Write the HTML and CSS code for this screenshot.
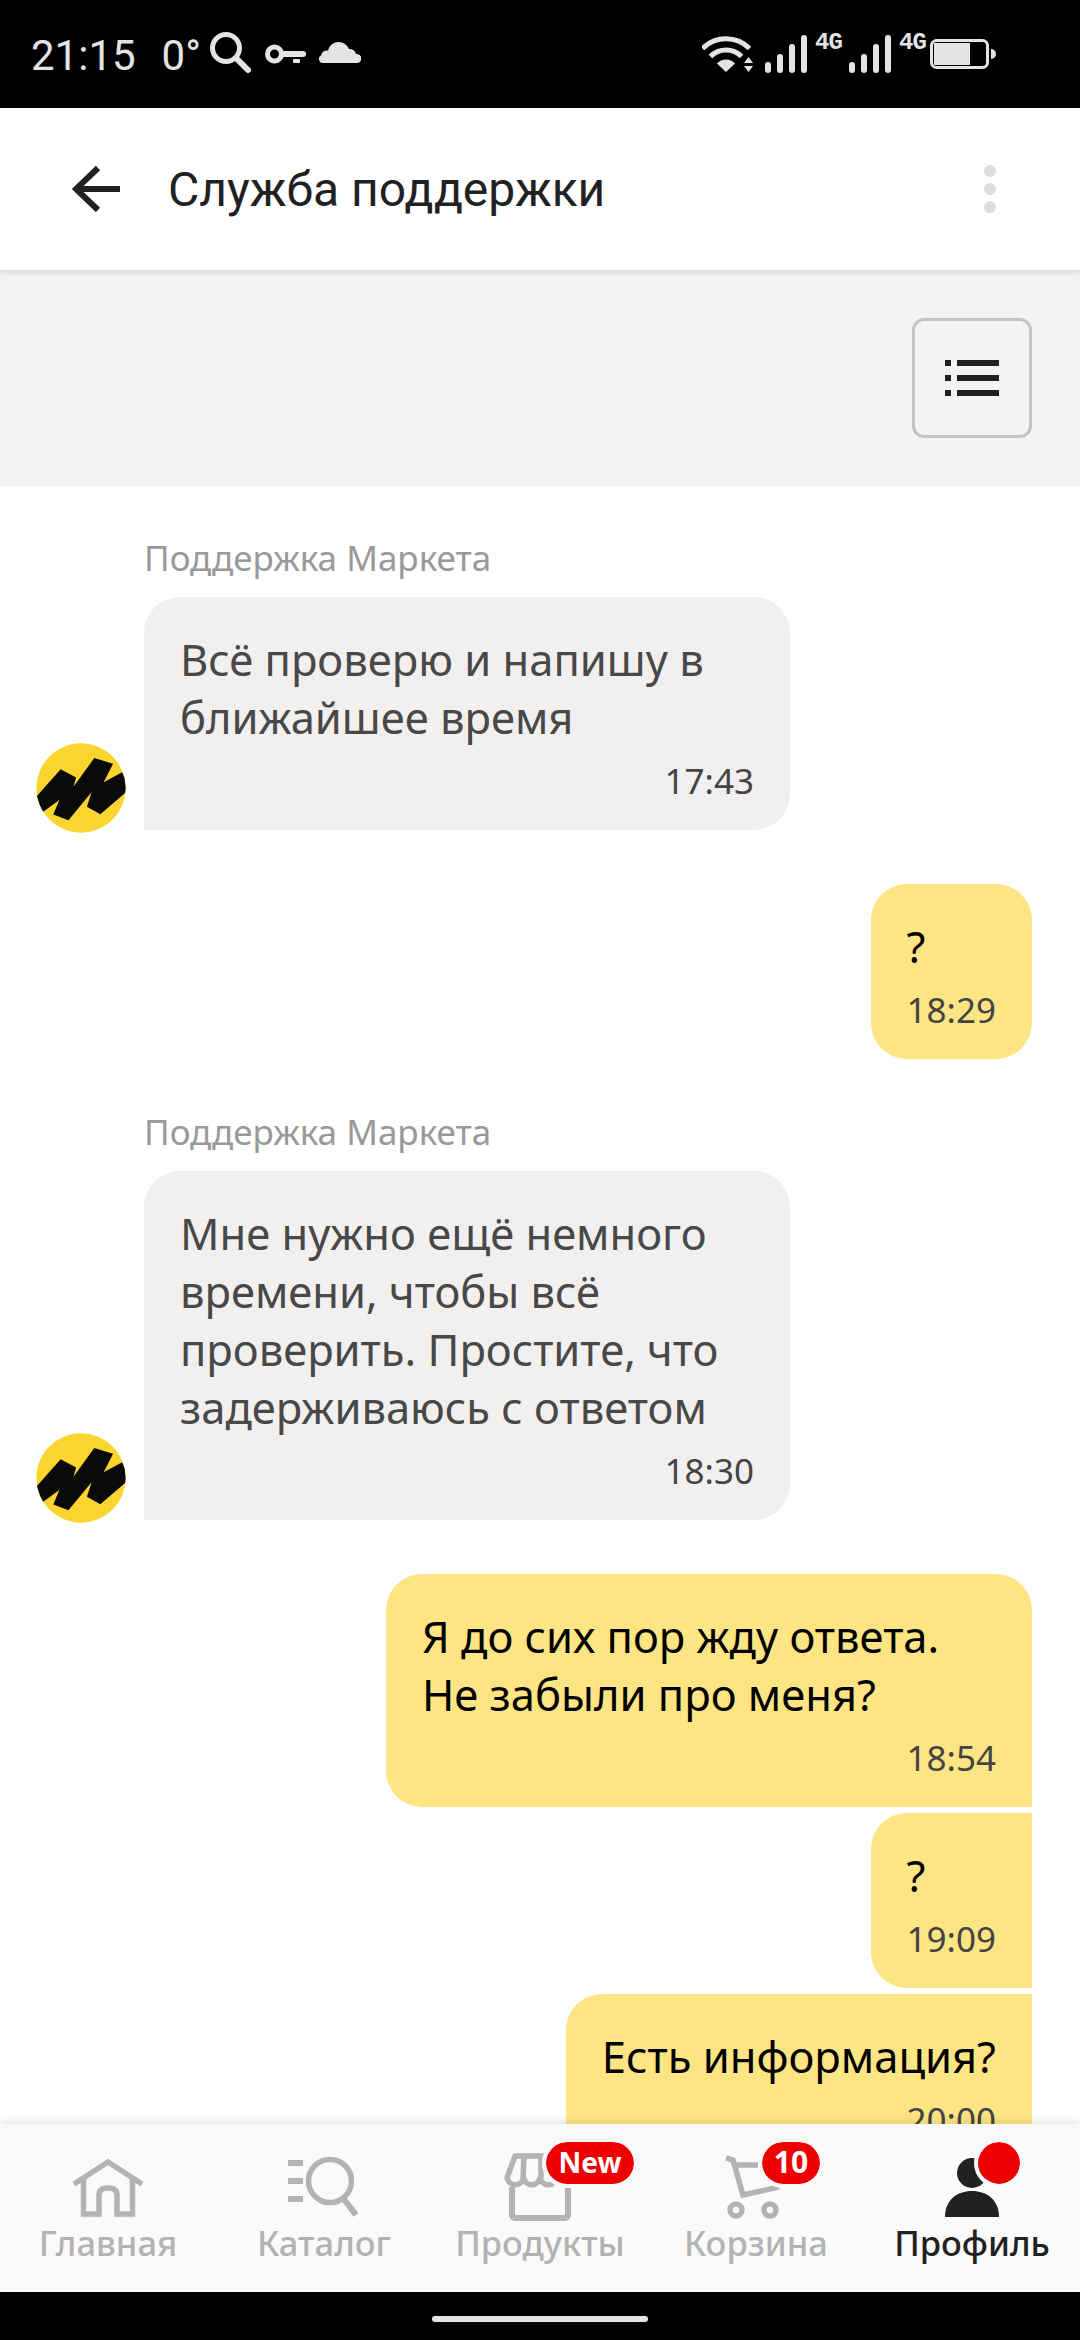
FILE: index.html
```html
<!DOCTYPE html>
<html lang="ru">
<head>
<meta charset="utf-8">
<title>Служба поддержки</title>
<link rel="stylesheet" href="styles.css">
</head>
<body>
<div class="screen">
  <div class="status">
    <div class="status-left">
      <span class="clock">21:15</span>
      <span class="temp">0°</span>
      <svg class="st-search" viewBox="0 0 42 42"><circle cx="17" cy="16" r="13.5" fill="none" stroke="#e4e4e4" stroke-width="5"/><path d="M27 26 L39 38" stroke="#e4e4e4" stroke-width="6" stroke-linecap="round"/></svg>
      <svg class="st-key" viewBox="0 0 41 22"><circle cx="9.5" cy="11" r="7" fill="none" stroke="#e4e4e4" stroke-width="5"/><path d="M16 8 H38 a3 3 0 0 1 0 6 H16 Z" fill="#e4e4e4"/><rect x="28" y="16" width="7" height="4" rx="1" fill="#e4e4e4"/></svg>
      <svg class="st-cloud" viewBox="0 0 42 22"><path d="M4 22 a4 4 0 0 1 -2 -7.500 a6 6 0 0 1 7 -5 a11 11 0 0 1 21 -1.500 a7 7 0 0 1 7 5 a4.500 4.500 0 0 1 1.500 9 Z" fill="#e4e4e4"/></svg>
    </div>
    <div class="status-right">
      <svg class="st-wifi" viewBox="0 0 51 36"><path d="M0.500 12.500 A33.500 33.500 0 0 1 47.500 12.500" fill="none" stroke="#e4e4e4" stroke-width="5"/><path d="M8.500 20.500 A22 22 0 0 1 39.500 20.500" fill="none" stroke="#e4e4e4" stroke-width="5"/><path d="M24 36 L15 27.500 A12 12 0 0 1 33 27.500 Z" fill="#e4e4e4"/><path d="M46.500 21 L42 27 H51 Z M42 30 H51 L46.500 36 Z" fill="#e4e4e4"/></svg>
      <svg class="st-signal" viewBox="0 0 42 38"><rect x="0" y="27" width="6" height="11" rx="3" fill="#e4e4e4"/><rect x="12" y="19" width="6" height="19" rx="3" fill="#e4e4e4"/><rect x="24" y="9" width="6" height="29" rx="3" fill="#e4e4e4"/><rect x="36" y="0" width="6" height="38" rx="3" fill="#e4e4e4"/></svg>
      <span class="net">4G</span>
      <svg class="st-signal" viewBox="0 0 42 38"><rect x="0" y="27" width="6" height="11" rx="3" fill="#e4e4e4"/><rect x="12" y="19" width="6" height="19" rx="3" fill="#e4e4e4"/><rect x="24" y="9" width="6" height="29" rx="3" fill="#e4e4e4"/><rect x="36" y="0" width="6" height="38" rx="3" fill="#e4e4e4"/></svg>
      <span class="net">4G</span>
      <svg class="st-batt" viewBox="0 0 66 30"><rect x="1.500" y="1.500" width="56" height="27" rx="5" fill="none" stroke="#e4e4e4" stroke-width="3"/><rect x="4" y="4" width="36" height="22" fill="#e4e4e4"/><path d="M61 10 a5 5 0 0 1 0 10 Z" fill="#e4e4e4"/></svg>
    </div>
  </div>

  <header class="header">
    <svg class="back" viewBox="0 0 48 48"><path d="M26 3 L4 24 L26 45 M4 24 H48" fill="none" stroke="#212121" stroke-width="6"/></svg>
    <h1 class="title">Служба поддержки</h1>
    <div class="dots"><i></i><i></i><i></i></div>
  </header>

  <div class="toolbar">
    <div class="list-btn">
      <svg viewBox="0 0 54 36" class="list-icon"><path d="M0 0h6v6H0z M12 0h42v6H12z M0 15h6v6H0z M12 15h42v6H12z M0 30h6v6H0z M12 30h42v6H12z" fill="#21201e"/></svg>
    </div>
  </div>

  <main class="chat">
    <div class="in-row">
      <svg class="avatar" viewBox="50 35 265 268"><defs><clipPath id="av1"><circle cx="182.500" cy="169" r="133"/></clipPath></defs><circle cx="182.500" cy="169" r="133" fill="#fbd52f"/><path clip-path="url(#av1)" d="M40 205 L122 113 L168 138 L160 165 L222 80 L278 97 L250 152 L305 122 L330 170 L240 247 L200 225 L214 182 L145 265 L100 248 L118 205 L70 240 Z" fill="#0a0a0a"/></svg>
      <div class="in-col">
        <div class="sender">Поддержка Маркета</div>
        <div class="bubble in tail-bl">
          <p class="text">Всё проверю и напишу в ближайшее время</p>
          <div class="time">17:43</div>
        </div>
      </div>
    </div>

    <div class="bubble out">
      <p class="text">?</p>
      <div class="time">18:29</div>
    </div>

    <div class="in-row">
      <svg class="avatar" viewBox="50 35 265 268"><defs><clipPath id="av2"><circle cx="182.500" cy="169" r="133"/></clipPath></defs><circle cx="182.500" cy="169" r="133" fill="#fbd52f"/><path clip-path="url(#av2)" d="M40 205 L122 113 L168 138 L160 165 L222 80 L278 97 L250 152 L305 122 L330 170 L240 247 L200 225 L214 182 L145 265 L100 248 L118 205 L70 240 Z" fill="#0a0a0a"/></svg>
      <div class="in-col">
        <div class="sender">Поддержка Маркета</div>
        <div class="bubble in tail-bl">
          <p class="text">Мне нужно ещё немного времени, чтобы всё проверить. Простите, что задерживаюсь с ответом</p>
          <div class="time">18:30</div>
        </div>
      </div>
    </div>

    <div class="out-group">
      <div class="bubble out sq-br wide">
        <p class="text">Я до сих пор жду ответа.<br>Не забыли про меня?</p>
        <div class="time">18:54</div>
      </div>
      <div class="bubble out sq-tr sq-br">
        <p class="text">?</p>
        <div class="time">19:09</div>
      </div>
      <div class="bubble out sq-tr">
        <p class="text">Есть информация?</p>
        <div class="time">20:00</div>
      </div>
    </div>
  </main>

  <nav class="nav">
    <div class="nav-item">
      <svg class="nav-icon" viewBox="0 0 90 66"><path d="M11 30 L45 8 L79 30" fill="none" stroke="#b3b3b3" stroke-width="5.500"/><path d="M20.500 23 V60 H36 V41 Q36 34 45 34 Q54 34 54 41 V60 H69.500 V23" fill="none" stroke="#b3b3b3" stroke-width="5.500"/></svg>
      <span class="nav-label">Главная</span>
    </div>
    <div class="nav-item">
      <svg class="nav-icon" viewBox="0 0 90 66"><path d="M9 6h15v6H9z M9 24h15v6H9z M9 42h15v6H9z" fill="#b3b3b3"/><circle cx="51" cy="27" r="21.500" fill="none" stroke="#b3b3b3" stroke-width="5.500"/><path d="M64 44 L77 61" stroke="#b3b3b3" stroke-width="6"/></svg>
      <span class="nav-label">Каталог</span>
    </div>
    <div class="nav-item">
      <svg class="nav-icon" viewBox="0 0 90 66"><path d="M20 2 H70 L78 24 a8.500 9 0 0 1 -16.500 0 a8.500 9 0 0 1 -16.500 0 a8.500 9 0 0 1 -16.500 0 a8.500 9 0 0 1 -16.500 0 Z M29 2 L28 24 M46 2 V24 M61 2 L62 24" fill="none" stroke="#b3b3b3" stroke-width="5.500" stroke-linejoin="round"/><path d="M17 33 V61 a3 3 0 0 0 3 3 H70 a3 3 0 0 0 3 -3 V33" fill="none" stroke="#b3b3b3" stroke-width="6"/></svg>
      <span class="badge">New</span>
      <span class="nav-label">Продукты</span>
    </div>
    <div class="nav-item">
      <svg class="nav-icon" viewBox="0 0 90 66"><path d="M15 4 L22 6 L32 41 L68 33 M24 11 H47" fill="none" stroke="#b3b3b3" stroke-width="5.500"/><circle cx="25" cy="56" r="6" fill="none" stroke="#b3b3b3" stroke-width="5.500"/><circle cx="59" cy="56" r="6" fill="none" stroke="#b3b3b3" stroke-width="5.500"/></svg>
      <span class="badge count">10</span>
      <span class="nav-label">Корзина</span>
    </div>
    <div class="nav-item active">
      <svg class="nav-icon" viewBox="0 0 90 66"><circle cx="45" cy="19" r="15" fill="#212121"/><path d="M18 63 C18 46 30 37 45 37 C60 37 72 46 72 63 Z" fill="#212121"/></svg>
      <span class="badge dot"></span>
      <span class="nav-label">Профиль</span>
    </div>
  </nav>

  <div class="gesture"><div class="indicator"></div></div>
</div>
</body>
</html>
```
FILE: styles.css
```css
* { box-sizing: border-box; }
html, body { margin: 0; padding: 0; background: #fff; }
.screen {
  width: 1080px;
  height: 2340px;
  display: flex;
  flex-direction: column;
  overflow: hidden;
  font-family: "Noto Sans", sans-serif;
  background: #fff;
}

/* status bar */
.status {
  height: 108px;
  flex: none;
  background: #000;
  display: flex;
  justify-content: space-between;
  align-items: center;
  padding: 0 84px 0 31px;
  color: #e4e4e4;
  font-family: Roboto, sans-serif;
}
.status-left, .status-right { display: flex; align-items: center; }
.clock, .temp { font-size: 42px; line-height: 50px; padding-top: 4px; }
.temp { margin-left: 26px; }
.st-search { width: 42px; height: 42px; margin-left: 8px; margin-top: -2px; }
.st-key { width: 41px; height: 22px; margin-left: 14px; }
.st-cloud { width: 42px; height: 22px; margin-left: 13px; margin-top: -4px; }
.status-right { gap: 8px; }
.st-wifi { width: 51px; height: 36px; margin-right: 4px; }
.st-signal { width: 42px; height: 38px; }
.net {
  width: 26px;
  height: 38px;
  font-size: 24px;
  line-height: 18px;
  font-weight: 700;
  letter-spacing: -1px;
  font-family: "Liberation Mono", monospace;
  white-space: nowrap;
  margin-top: -2px;
}
.st-batt { width: 66px; height: 30px; margin-left: -3px; }

/* header */
.header {
  position: relative;
  z-index: 2;
  height: 162px;
  flex: none;
  background: #fff;
  display: flex;
  align-items: center;
  padding: 0 84px 0 72px;
  box-shadow: 0 2px 6px rgba(0, 0, 0, .14);
}
.back { width: 48px; height: 48px; flex: none; }
.title {
  margin: 0 0 0 48px;
  flex: 1;
  font-family: Roboto, sans-serif;
  font-weight: 400;
  font-size: 48px;
  color: #212121;
}
.dots { display: flex; flex-direction: column; gap: 6px; }
.dots i { width: 12px; height: 12px; border-radius: 50%; background: #dddddd; display: block; }

/* toolbar */
.toolbar {
  height: 216px;
  flex: none;
  background: #f4f3f1;
  display: flex;
  justify-content: flex-end;
  padding: 48px 48px 0 0;
}
.list-btn {
  width: 120px;
  height: 120px;
  border: 3px solid #c4c4c2;
  border-radius: 12px;
  display: flex;
  align-items: center;
  justify-content: center;
}
.list-icon { width: 54px; height: 36px; }

/* chat */
.chat {
  flex: 1;
  min-height: 0;
  overflow: hidden;
  padding: 53px 48px 0 36px;
  display: flex;
  flex-direction: column;
  gap: 54px;
}
.in-row { display: flex; align-items: flex-end; gap: 18px; }
.avatar { width: 90px; height: 90px; flex: none; margin-bottom: -3px; }
.in-col { display: flex; flex-direction: column; align-items: flex-start; }
.sender { height: 58px; line-height: 37px; font-size: 35px; color: #999; }
.out-group { display: flex; flex-direction: column; align-items: flex-end; gap: 6px; }
.bubble {
  max-width: 646px;
  padding: 33px 36px 27px;
  border-radius: 36px;
}
.bubble.in { background: #f1f0ee; color: #484848; }
.bubble.out { background: #fee583; color: #000; align-self: flex-end; }
.bubble.wide { width: 646px; }
.tail-bl { border-bottom-left-radius: 0; }
.sq-br { border-bottom-right-radius: 0; }
.sq-tr { border-top-right-radius: 0; }
.text { margin: 0; font-size: 43.5px; line-height: 58px; }
.time { margin-top: 13px; font-size: 35px; line-height: 44px; text-align: right; color: #444; }

/* bottom nav */
.nav {
  position: relative;
  z-index: 2;
  height: 168px;
  flex: none;
  background: #fafafa;
  display: grid;
  grid-template-columns: repeat(5, 216px);
  box-shadow: 0 -3px 8px rgba(0, 0, 0, .1);
}
.nav-item {
  position: relative;
  display: flex;
  flex-direction: column;
  align-items: center;
  padding-top: 30px;
}
.nav-icon { width: 90px; height: 66px; overflow: visible; flex: none; }
.nav-label {
  font-size: 34.5px;
  line-height: 46px;
  font-weight: 500;
  color: #b3b3b3;
  white-space: nowrap;
}
.active .nav-label { color: #212121; }
.badge {
  position: absolute;
  top: 14px;
  left: 110px;
  height: 50px;
  min-width: 96px;
  border: 4px solid #fafafa;
  border-radius: 25px;
  background: #ee0000;
  background-clip: padding-box;
  color: #fff;
  font-size: 28px;
  line-height: 40px;
  font-weight: 700;
  text-align: center;
}
.badge.count { min-width: 66px; font-size: 30px; }
.badge.dot { min-width: 0; width: 50px; }

/* gesture bar */
.gesture {
  height: 48px;
  flex: none;
  background: #000;
  display: flex;
  justify-content: center;
  padding-top: 24px;
}
.indicator { width: 216px; height: 6px; border-radius: 3px; background: #e4e4e4; }
```
